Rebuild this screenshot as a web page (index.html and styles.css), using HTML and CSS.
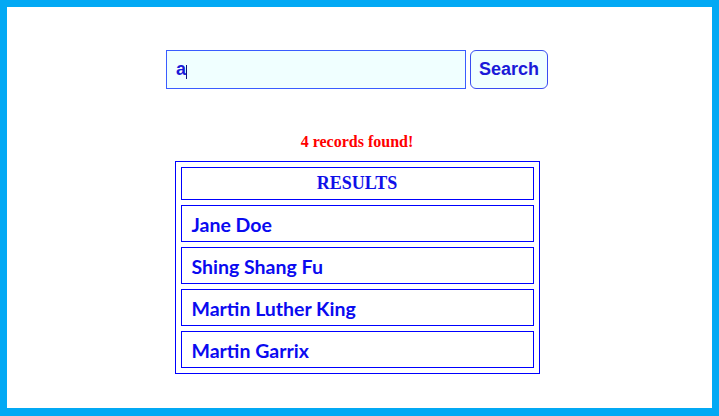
FILE: index.html
```html
<!DOCTYPE html>
<html>
<head>
<meta charset="utf-8">
<link rel="stylesheet" href="styles.css">
</head>
<body>
<div class="frame">
  <div class="content">
    <form class="search" onsubmit="return false">
      <div class="input-wrap">
        <input class="search-input" type="text" value="a">
        <span class="caret"></span>
      </div>
      <button class="search-btn" type="button">Search</button>
    </form>
    <p class="message">4 records found!</p>
    <table class="results">
      <tr><th class="head">RESULTS</th></tr>
      <tr><td class="name">Jane Doe</td></tr>
      <tr><td class="name">Shing Shang Fu</td></tr>
      <tr><td class="name">Martin Luther King</td></tr>
      <tr><td class="name">Martin Garrix</td></tr>
    </table>
  </div>
</div>
</body>
</html>
```

FILE: styles.css
```css
html, body {
  margin: 0;
  padding: 0;
  background: #ffffff;
}

.frame {
  box-sizing: border-box;
  height: 416px;
  border: 7px solid #03a9f4;
  border-bottom-width: 8px;
  background: #ffffff;
}

.content {
  display: flex;
  flex-direction: column;
  align-items: center;
  padding-top: 43px;
  padding-right: 5px;
}

.search {
  display: flex;
  gap: 4px;
  margin: 0;
}

.input-wrap {
  position: relative;
  display: flex;
}

.search-input {
  box-sizing: border-box;
  width: 300px;
  height: 39px;
  margin: 0;
  padding: 0 9px;
  border: 1px solid #3a5cff;
  background: #f0ffff;
  color: #1a1ad8;
  font-family: "Liberation Sans", Arial, sans-serif;
  font-weight: bold;
  font-size: 18px;
  outline: none;
  caret-color: transparent;
}

.caret {
  position: absolute;
  left: 20px;
  top: 15px;
  width: 1px;
  height: 14px;
  background: #10107a;
}

.search-btn {
  box-sizing: border-box;
  width: 78px;
  height: 39px;
  margin: 0;
  padding: 0;
  border: 1px solid #3a4cf0;
  border-radius: 6px;
  background: #f0ffff;
  color: #1a1ad8;
  font-family: "Liberation Sans", Arial, sans-serif;
  font-weight: bold;
  font-size: 18px;
}

.message {
  margin: 43px 0 9px;
  line-height: 20px;
  color: #ff0000;
  font-family: "Liberation Serif", "Times New Roman", serif;
  font-weight: bold;
  font-size: 16px;
}

.results {
  width: 365px;
  border: 1px solid #0000ff;
  border-collapse: separate;
  border-spacing: 5px;
}

.head {
  box-sizing: border-box;
  height: 33px;
  padding: 0;
  border: 1px solid #0000ff;
  color: #1010e8;
  font-family: "Liberation Serif", "Times New Roman", serif;
  font-weight: bold;
  font-size: 18px;
  text-align: center;
}

.name {
  box-sizing: border-box;
  height: 37px;
  padding: 1px 10px 0;
  border: 1px solid #0000ff;
  color: #0a0af0;
  font-family: "Comic Sans MS", Lato, sans-serif;
  font-weight: bold;
  font-size: 19.5px;
  text-align: left;
}
```
